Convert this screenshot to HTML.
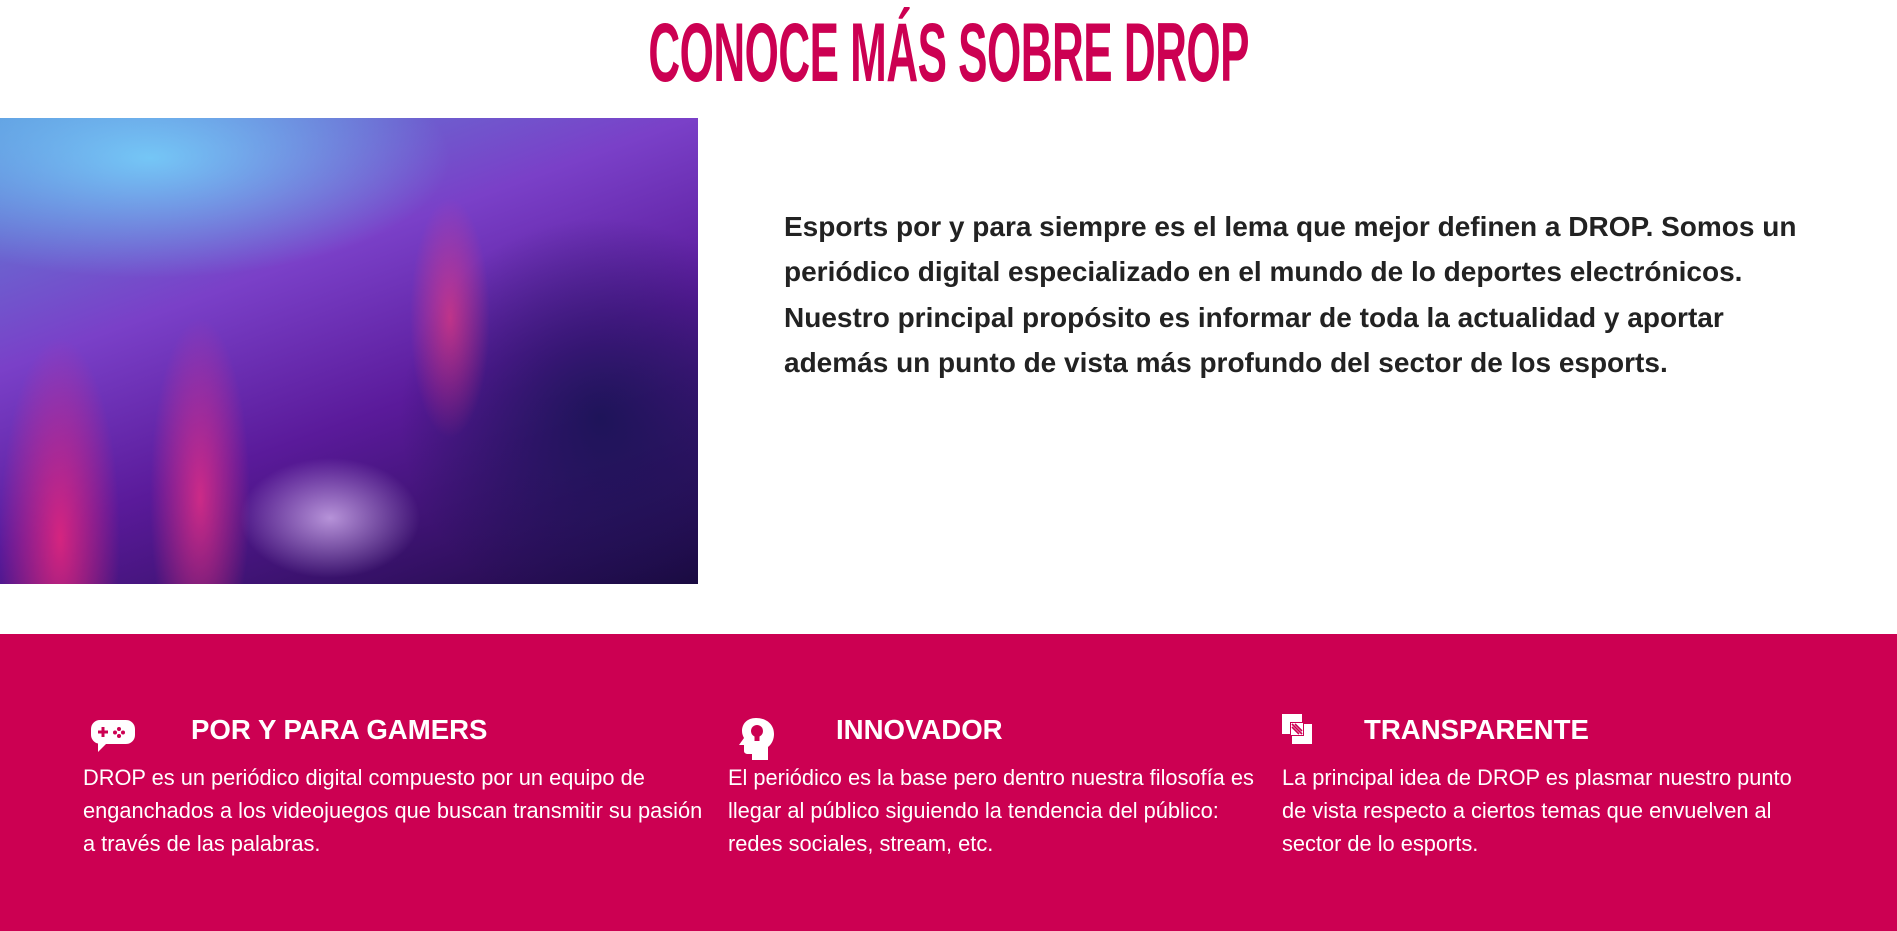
<!DOCTYPE html>
<html><head><meta charset="utf-8"><style>
*{margin:0;padding:0;box-sizing:border-box}
body{width:1897px;height:931px;overflow:hidden;background:#fff;font-family:"Liberation Sans",Arial,sans-serif;position:relative}
.title{position:absolute;left:0;width:1897px;top:4px;text-align:center;color:#cc0052;font-weight:bold;font-size:88px;letter-spacing:-1px}
.title span{display:inline-block;transform:scale(0.5,0.95);transform-origin:center top;white-space:nowrap}
.img{position:absolute;left:0;top:118px;width:698px;height:466px;overflow:hidden;
background:
radial-gradient(ellipse 90px 60px at 330px 400px,rgba(230,200,255,.7),transparent),
radial-gradient(ellipse 60px 200px at 60px 420px,rgba(255,40,120,.75),transparent),
radial-gradient(ellipse 50px 180px at 200px 380px,rgba(255,50,130,.7),transparent),
radial-gradient(ellipse 40px 120px at 450px 200px,rgba(255,60,120,.6),transparent),
radial-gradient(ellipse 300px 120px at 150px 40px,rgba(120,220,255,.8),transparent),
radial-gradient(ellipse 200px 200px at 600px 300px,rgba(20,20,80,.8),transparent),
linear-gradient(160deg,#5a8bd8 0%,#7a40c8 35%,#5a1a9a 60%,#1a0a40 100%)}
.para{position:absolute;left:784px;top:204px;font-size:28px;font-weight:bold;line-height:45.4px;color:#222;white-space:nowrap}
.pink{position:absolute;left:0;top:634px;width:1897px;height:297px;background:#cc0052;color:#fff}
.h{position:absolute;top:714px;font-size:27.6px;font-weight:bold;color:#fff;white-space:nowrap}
.t{position:absolute;top:761px;font-size:21.8px;line-height:33px;color:#fff;white-space:nowrap}
svg{position:absolute}
</style></head><body>
<div class="title"><span>CONOCE MÁS SOBRE DROP</span></div>
<div class="img"></div>
<div class="para">Esports por y para siempre es el lema que mejor definen a DROP. Somos un<br>periódico digital especializado en el mundo de lo deportes electrónicos.<br>Nuestro principal propósito es informar de toda la actualidad y aportar<br>además un punto de vista más profundo del sector de los esports.</div>
<div class="pink"></div>
<svg style="left:90px;top:718px" width="46" height="38" viewBox="0 0 46 38"><path d="M10 2h26a9 9 0 0 1 9 9v6a9 9 0 0 1-9 9H16l-8 8v-8.5A9 9 0 0 1 1 17v-6A9 9 0 0 1 10 2z" fill="#fff"/><path d="M8 14h10M13 9v10" stroke="#cc0052" stroke-width="3"/><circle cx="29" cy="11" r="2" fill="#cc0052"/><circle cx="29" cy="18" r="2" fill="#cc0052"/><circle cx="25" cy="14.5" r="2" fill="#cc0052"/><circle cx="33" cy="14.5" r="2" fill="#cc0052"/></svg>
<div class="h" style="left:191px">POR Y PARA GAMERS</div>
<div class="t" style="left:83px">DROP es un periódico digital compuesto por un equipo de<br>enganchados a los videojuegos que buscan transmitir su pasión<br>a través de las palabras.</div>
<svg style="left:738px;top:716px" width="36" height="44" viewBox="0 0 36 44"><path d="M18 2C9 2 4 8 4 15c0 3 1 5 2 7l-5 7h5v6c0 2 2 3 4 3h4v6h16V31c4-3 6-8 6-13C36 8 28 2 18 2z" fill="#fff"/><circle cx="19" cy="15" r="6" fill="#cc0052"/><rect x="16.5" y="20" width="5" height="5" fill="#cc0052"/></svg>
<div class="h" style="left:836px">INNOVADOR</div>
<div class="t" style="left:728px">El periódico es la base pero dentro nuestra filosofía es<br>llegar al público siguiendo la tendencia del público:<br>redes sociales, stream, etc.</div>
<svg style="left:1282px;top:714px" width="30" height="30" viewBox="0 0 30 30"><path d="M0 0h20v8h-12v12h-8z" fill="#fff"/><path d="M10 10h20v20h-20v-8h12v-12h-12z" fill="#fff"/><rect x="9" y="9" width="12" height="12" fill="#fff"/><path d="M10 13l7 7M10 10l10 10M13 10l7 7" stroke="#cc0052" stroke-width="1.6"/></svg>
<div class="h" style="left:1364px">TRANSPARENTE</div>
<div class="t" style="left:1282px">La principal idea de DROP es plasmar nuestro punto<br>de vista respecto a ciertos temas que envuelven al<br>sector de lo esports.</div>
</body></html>
